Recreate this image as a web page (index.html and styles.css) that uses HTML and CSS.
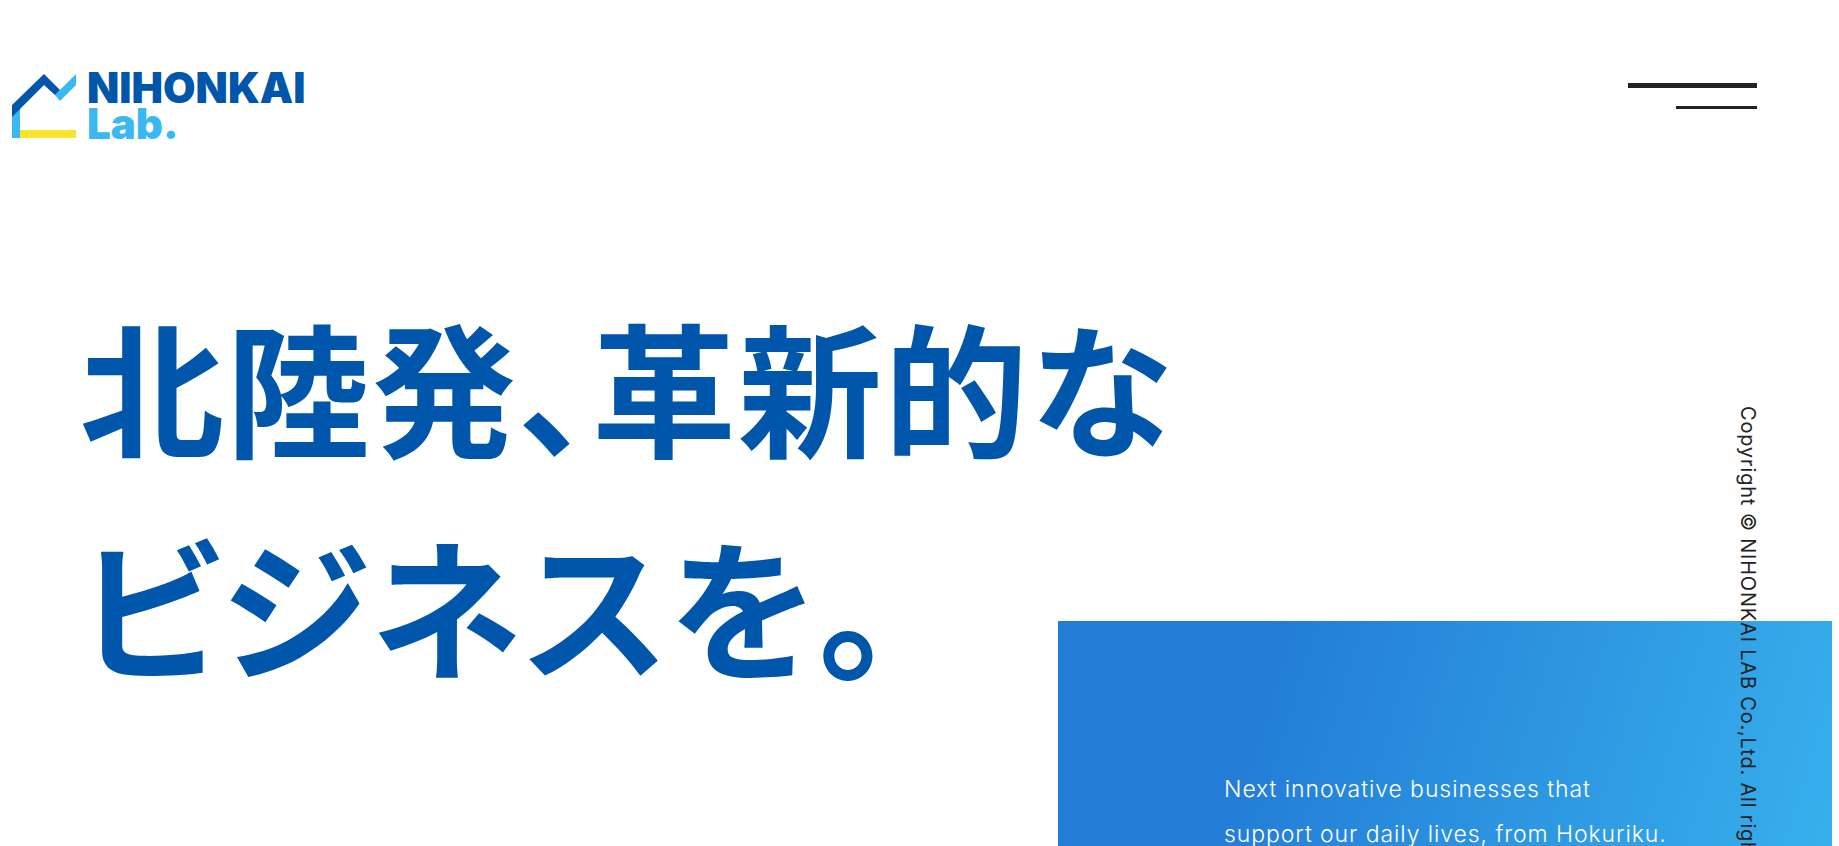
FILE: index.html
```html
<!DOCTYPE html>
<html lang="ja">
<head>
<meta charset="utf-8">
<meta name="viewport" content="width=device-width, initial-scale=1">
<title>NIHONKAI Lab.</title>
<link rel="stylesheet" href="styles.css">
</head>
<body>
<div class="page">
  <header class="header">
    <a class="logo" href="#" aria-label="NIHONKAI Lab.">
      <svg class="logo-mark" viewBox="0 0 64 64" aria-hidden="true">
        <path fill="#3ab8f2" d="M0 40L8 32V64H0Z"/>
        <path fill="#f9e42a" d="M8 56H64V64H8Z"/>
        <path fill="#3ab8f2" d="M43 21L48 16L64 0V11L48 27Z"/>
        <path fill="#0056aa" d="M0 31L32 0L48 16L43 21L32 11L0 43Z"/>
      </svg>
      <span class="logo-text"><span class="logo-name">NIHONKAI</span><span class="logo-lab">Lab.</span></span>
    </a>
    <button class="menu" type="button" aria-label="Menu">
      <span class="bar bar-long"></span>
      <span class="bar bar-short"></span>
    </button>
  </header>
  <main class="main">
    <h1 class="title"><span class="title-line">北陸発、革新的な</span><span class="title-line title-kana">ビジネスを。</span></h1>
    <section class="panel">
      <p class="lead">Next innovative businesses that<br>support our daily lives, from Hokuriku.</p>
    </section>
  </main>
  <small class="copyright">Copyright © NIHONKAI LAB Co.,Ltd. All rights reserved.</small>
</div>
</body>
</html>
```
FILE: styles.css
```css
* { box-sizing: border-box; }
body {
  margin: 0;
  background: #fff;
  color: #222;
  font-family: Inter, "Noto Sans CJK JP", sans-serif;
}
.page {
  position: relative;
  height: 100vh;
  margin-right: 7px;
  overflow: hidden;
}
.header {
  display: flex;
  justify-content: space-between;
  align-items: flex-start;
  padding: 70px 75px 0 12px;
}
.logo {
  display: flex;
  align-items: center;
  gap: 11px;
  text-decoration: none;
}
.logo-mark { width: 64px; height: 64px; }
.logo-text {
  display: flex;
  flex-direction: column;
  font-weight: 900;
  font-size: 42px;
  line-height: 36px;
  color: #0056aa;
}
.logo-lab { color: #3ab8f2; }
.menu {
  display: flex;
  flex-direction: column;
  align-items: flex-end;
  gap: 18px;
  margin-top: 13px;
  padding: 0;
  border: 0;
  background: none;
  cursor: pointer;
}
.bar { background: #222; }
.bar-long { width: 129px; height: 5px; }
.bar-short { width: 81px; height: 3px; }
.main {
  display: grid;
  grid-template-rows: 479px auto;
}
.title {
  grid-area: 1 / 1;
  margin: 0;
  padding: 132px 0 0 80px;
  color: #0056aa;
  font-family: "Noto Sans CJK JP", sans-serif;
  font-weight: 700;
  font-size: 144px;
  line-height: 220px;
  letter-spacing: 2px;
  font-feature-settings: "palt";
}
.title-line { display: block; }
.title-kana {
  font-size: 152px;
  line-height: 218px;
}
.panel {
  grid-area: 2 / 1;
  margin-left: 1058px;
  padding: 146px 0 120px 166px;
  background: linear-gradient(107deg, #237cd6 24%, #38b3ee);
}
.lead {
  margin: 0;
  color: #fff;
  font-size: 23px;
  font-weight: 300;
  line-height: 45px;
  letter-spacing: 0.04em;
}
.copyright {
  position: absolute;
  top: 406px;
  right: 72px;
  writing-mode: vertical-rl;
  text-orientation: sideways;
  white-space: nowrap;
  font-size: 20px;
  line-height: 24px;
  letter-spacing: 0.04em;
}
```
